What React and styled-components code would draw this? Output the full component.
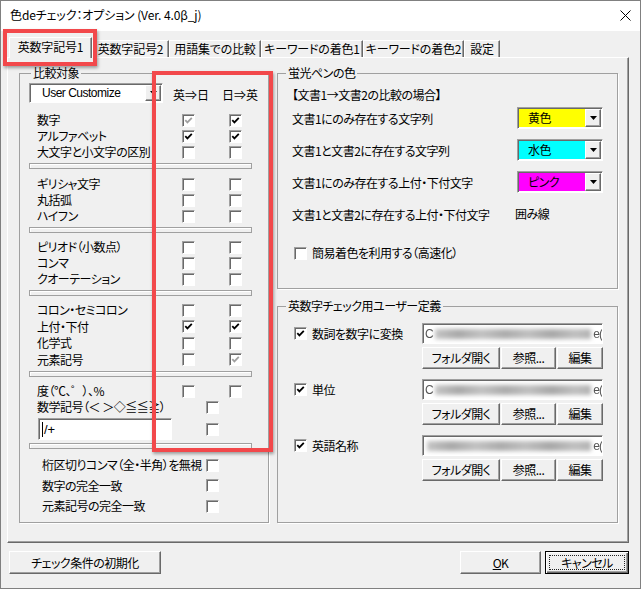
import React from "react";
import styled, { createGlobalStyle, css } from "styled-components";

const FONT = `"Noto Sans CJK JP", "Noto Sans", "Liberation Sans", sans-serif`;

const Global = createGlobalStyle`
  html, body { margin: 0; padding: 0; background: #fff; }
  body {
    font-family: ${FONT};
    font-size: 12px;
    color: #000;
    font-feature-settings: "palt";
    letter-spacing: -0.5px;
  }
  * { box-sizing: border-box; }
`;

const raised = css`
  background: #f0f0f0;
  border: 1px solid;
  border-color: #fff #696969 #696969 #fff;
  box-shadow: inset -1px -1px 0 #a0a0a0;
`;

const sunken = css`
  border: 1px solid;
  border-color: #a0a0a0 #fff #fff #a0a0a0;
  box-shadow: inset 1px 1px 0 #696969;
  background: #fff;
`;

const Window = styled.div`
  position: relative;
  width: 641px;
  height: 589px;
  border: 1px solid #808080;
  background: #f0f0f0;
  overflow: hidden;
`;

const TitleBar = styled.div`
  height: 30px;
  background: #fff;
  display: flex;
  align-items: center;
  justify-content: space-between;
  padding: 0 9px 2px 9px;
`;

const Title = styled.div`
  font-size: 12px;
  line-height: 14px;
  letter-spacing: -0.1px;
`;

const Body = styled.div`
  padding: 0 11px 0 6px;
`;

const TabStrip = styled.div`
  height: 26px;
  display: flex;
  align-items: flex-end;
  padding-left: 2px;
`;

const Tab = styled.div`
  position: relative;
  z-index: ${(p) => (p.$active ? 2 : 0)};
  width: ${(p) => p.$w}px;
  height: ${(p) => (p.$active ? 21 : 17)}px;
  margin-bottom: ${(p) => (p.$active ? -1 : 0)}px;
  padding-bottom: ${(p) => (p.$active ? 2 : 0)}px;
  background: #f0f0f0;
  border-top: 1px solid #fff;
  border-left: 1px solid #fff;
  border-right: 1px solid #696969;
  box-shadow: inset -1px 0 0 #a0a0a0;
  display: flex;
  align-items: center;
  justify-content: center;
  line-height: 14px;
  white-space: nowrap;
  letter-spacing: -0.2px;
`;

const Panel = styled.div`
  width: 622px;
  height: 486px;
  ${raised};
  display: flex;
  gap: 8px;
  padding: 8px 0 0 11px;
`;

const Group = styled.fieldset`
  margin: 0;
  padding: 0;
  min-width: 0;
  width: ${(p) => p.$w}px;
  height: ${(p) => p.$h}px;
  border: 1px solid #a0a0a0;
  box-shadow: 1px 1px 0 #fff;
`;

const Legend = styled.legend`
  margin-left: ${(p) => p.$ml}px;
  padding: 0 2px;
  line-height: 14px;
  font-size: 12px;
`;

const LeftInner = styled.div`
  padding: 3px 0 0 9px;
`;

const TopRow = styled.div`
  display: flex;
  align-items: flex-start;
  height: 20px;
  margin-bottom: 9px;
`;

const Combo = styled.div`
  width: 134px;
  height: 20px;
  display: flex;
  padding: 1px;
  ${sunken};
`;

const ComboText = styled.div`
  flex: 1;
  padding-left: 11px;
  line-height: 16px;
  font-family: "Liberation Sans", ${FONT};
  font-size: 12px;
`;

const ComboButton = styled.div`
  width: 16px;
  ${raised};
  display: flex;
  align-items: center;
  justify-content: center;
`;

const HeaderCell = styled.div`
  width: 36px;
  margin-left: ${(p) => p.$ml}px;
  margin-top: 5px;
  text-align: center;
  line-height: 14px;
  white-space: nowrap;
  letter-spacing: 0;
`;

const CheckRow = styled.div`
  display: grid;
  grid-template-columns: ${(p) => (p.$mid ? "177px 13px" : "153px 13px 34px 13px")};
  align-items: center;
  height: ${(p) => p.$h || 16}px;
`;

const Label = styled.span`
  padding-left: ${(p) => p.$pl ?? 8}px;
  line-height: 14px;
  white-space: nowrap;
`;

const Separator = styled.div`
  width: 223px;
  height: 6px;
  margin: ${(p) => p.$mt}px 0 ${(p) => p.$mb}px;
  border: 1px solid #a0a0a0;
  box-shadow: inset 1px 1px 0 #fff;
`;

const SmallField = styled.div`
  width: 134px;
  height: 22px;
  margin-left: 9px;
  ${sunken};
  display: flex;
  align-items: center;
  padding-left: 3px;
  font-family: "Liberation Sans", ${FONT};
  font-size: 13px;
  letter-spacing: 0;
`;

const Caret = styled.span`
  display: inline-block;
  width: 1px;
  height: 15px;
  background: #000;
  margin-right: 1px;
`;

const FieldRow = styled.div`
  display: grid;
  grid-template-columns: 177px 13px;
  align-items: center;
  height: 22px;
  margin-top: 3px;
`;

const BoxEl = styled.span`
  display: inline-flex;
  align-items: center;
  justify-content: center;
  width: 13px;
  height: 13px;
  ${sunken};
  flex: none;
`;

const RightCol = styled.div`
  display: flex;
  flex-direction: column;
  gap: 10px;
`;

const RightInner = styled.div`
  padding: ${(p) => p.$pt}px 14px 0 14px;
`;

const Heading = styled.div`
  line-height: 14px;
  margin-bottom: 5px;
`;

const ColorRow = styled.div`
  display: flex;
  align-items: center;
  justify-content: space-between;
  height: 22px;
  margin-bottom: 10px;
`;

const ColorSelect = styled.div`
  width: 86px;
  height: 22px;
  display: flex;
  padding: 1px;
  ${sunken};
`;

const ColorFill = styled.div`
  flex: 1;
  background: ${(p) => p.$c};
  padding-left: 9px;
  line-height: 17px;
  font-size: 12px;
`;

const ArrowBtn = styled.div`
  width: 16px;
  ${raised};
  display: flex;
  align-items: center;
  justify-content: center;
`;

const PlainValue = styled.div`
  width: 88px;
  line-height: 14px;
`;

const InlineCheck = styled.label`
  display: flex;
  align-items: center;
  gap: 5px;
  padding-left: 2px;
  line-height: 14px;
  margin-top: ${(p) => p.$mt || 0}px;
`;

const Entry = styled.div`
  display: grid;
  grid-template-columns: 130px 181px;
  margin-bottom: 10px;
`;

const EntryLeft = styled.div`
  height: 21px;
  display: flex;
  align-items: center;
`;

const EntryRight = styled.div`
  display: flex;
  flex-direction: column;
  gap: 3px;
`;

const PathField = styled.div`
  height: 21px;
  ${sunken};
  display: flex;
  align-items: center;
  overflow: hidden;
  padding-left: 2px;
  font-family: "Liberation Sans", ${FONT};
  font-size: 12px;
  color: #333;
`;

const Blur = styled.div`
  flex: 1;
  height: 10px;
  margin: 0 2px;
  background: linear-gradient(
    90deg,
    #c4c4c4 0%,
    #a9a9a9 15%,
    #c2c2c2 30%,
    #acacac 45%,
    #bfbfbf 60%,
    #a8a8a8 75%,
    #c0c0c0 90%,
    #b2b2b2 100%
  );
  filter: blur(2px);
`;

const PathEdge = styled.span`
  flex: none;
  color: #555;
  filter: blur(0.4px);
  letter-spacing: -1px;
`;

const ButtonRow = styled.div`
  display: grid;
  grid-template-columns: 78px 55px 46px;
  gap: 1px;
`;

const Button = styled.div`
  height: ${(p) => p.$h || 22}px;
  width: ${(p) => (p.$w ? `${p.$w}px` : "auto")};
  ${raised};
  display: flex;
  align-items: center;
  justify-content: center;
  line-height: 14px;
  white-space: nowrap;
`;

const DefaultButton = styled.div`
  height: 23px;
  width: ${(p) => p.$w}px;
  background: #f0f0f0;
  border: 1px solid #000;
  box-shadow: inset 1px 1px 0 #fff, inset -1px -1px 0 #696969, inset -2px -2px 0 #a0a0a0;
  display: flex;
  padding: 3px;
`;

const FocusRect = styled.span`
  flex: 1;
  border: 1px dotted #222;
  display: flex;
  align-items: center;
  justify-content: center;
  line-height: 14px;
`;

const Footer = styled.div`
  width: 622px;
  margin-top: 8px;
  display: flex;
  justify-content: space-between;
  padding-left: 2px;
`;

const FooterRight = styled.div`
  display: flex;
  gap: 4px;
`;

const Highlight = styled.div`
  position: absolute;
  left: ${(p) => p.$x}px;
  top: ${(p) => p.$y}px;
  width: ${(p) => p.$w}px;
  height: ${(p) => p.$h}px;
  border: 4px solid #f2484b;
  box-shadow: 1px 2px 3px rgba(0, 0, 0, 0.35);
  pointer-events: none;
  z-index: 5;
`;

const Mark = ({ gray }) => (
  <svg width="9" height="9" viewBox="0 0 9 9">
    <polyline
      points="1.3,4.2 3.4,6.4 7.8,1.8"
      fill="none"
      stroke={gray ? "#a0a0a0" : "#000"}
      strokeWidth="1.8"
    />
  </svg>
);

const Check = ({ on, gray }) => <BoxEl>{on ? <Mark gray={gray} /> : null}</BoxEl>;

const Arrow = () => (
  <svg width="7" height="4" viewBox="0 0 7 4">
    <polygon points="0,0 7,0 3.5,4" fill="#000" />
  </svg>
);

const CloseIcon = () => (
  <svg width="11" height="11" viewBox="0 0 11 11">
    <path d="M0.5 0.5 L10.5 10.5 M10.5 0.5 L0.5 10.5" stroke="#000" strokeWidth="1" />
  </svg>
);

const tabs = [
  { t: "英数字記号1", w: 83, active: true },
  { t: "英数字記号2", w: 77 },
  { t: "用語集での比較", w: 92 },
  { t: "キーワードの着色1", w: 102 },
  { t: "キーワードの着色2", w: 101 },
  { t: "設定", w: 36 },
];

// [label, col1, col2] where value: 0 none, 1 checked, 2 checked gray
const blocks = [
  {
    h: 16,
    rows: [
      ["数字", 2, 1],
      ["アルファベット", 1, 1],
      ["大文字と小文字の区別", 0, 0],
    ],
    sep: [3, 7],
  },
  {
    h: 16,
    rows: [
      ["ギリシャ文字", 0, 0],
      ["丸括弧", 0, 0],
      ["ハイフン", 0, 0],
    ],
    sep: [3, 6],
  },
  {
    h: 16,
    rows: [
      ["ピリオド（小数点）", 0, 0],
      ["コンマ", 0, 0],
      ["クオーテーション", 0, 0],
    ],
    sep: [3, 6],
  },
  {
    h: 16.5,
    rows: [
      ["コロン・セミコロン", 0, 0],
      ["上付・下付", 1, 1],
      ["化学式", 0, 0],
      ["元素記号", 0, 2],
    ],
    sep: [3, 6],
  },
];

const colorRows = [
  { label: "文書1にのみ存在する文字列", c: "#ffff00", v: "黄色" },
  { label: "文書1と文書2に存在する文字列", c: "#00ffff", v: "水色" },
  { label: "文書1にのみ存在する上付・下付文字", c: "#ff00ff", v: "ピンク" },
];

const entries = [
  { label: "数詞を数字に変換", c: true },
  { label: "単位", c: true },
  { label: "英語名称", c: false },
];

export default function App() {
  return (
    <>
      <Global />
      <Window>
        <TitleBar>
          <Title>色deチェック：オプション (Ver. 4.0β_j)</Title>
          <CloseIcon />
        </TitleBar>
        <Body>
          <TabStrip>
            {tabs.map((t) => (
              <Tab key={t.t} $w={t.w} $active={t.active}>
                {t.t}
              </Tab>
            ))}
          </TabStrip>
          <Panel>
            <Group $w={250} $h={457}>
              <Legend $ml={11}>比較対象</Legend>
              <LeftInner>
                <TopRow>
                  <Combo>
                    <ComboText>User Customize</ComboText>
                    <ComboButton>
                      <Arrow />
                    </ComboButton>
                  </Combo>
                  <HeaderCell $ml={10}>英⇒日</HeaderCell>
                  <HeaderCell $ml={13}>日⇒英</HeaderCell>
                </TopRow>
                {blocks.map((b, bi) => (
                  <React.Fragment key={bi}>
                    {b.rows.map(([l, a, c]) => (
                      <CheckRow key={l} $h={b.h}>
                        <Label>{l}</Label>
                        <Check on={a > 0} gray={a === 2} />
                        <span />
                        <Check on={c > 0} gray={c === 2} />
                      </CheckRow>
                    ))}
                    <Separator $mt={b.sep[0]} $mb={b.sep[1]} />
                  </React.Fragment>
                ))}
                <CheckRow>
                  <Label>度（℃、゜）、%</Label>
                  <Check />
                  <span />
                  <Check />
                </CheckRow>
                <CheckRow $mid>
                  <Label>数学記号（＜ ＞◇≦≦≧）</Label>
                  <Check />
                </CheckRow>
                <FieldRow>
                  <SmallField>
                    <Caret />/+
                  </SmallField>
                  <Check />
                </FieldRow>
                <Separator $mt={3} $mb={6} />
                <CheckRow $mid $h={20.5}>
                  <Label $pl={13}>桁区切りコンマ（全・半角）を無視</Label>
                  <Check />
                </CheckRow>
                <CheckRow $mid $h={20.5}>
                  <Label $pl={13}>数字の完全一致</Label>
                  <Check />
                </CheckRow>
                <CheckRow $mid $h={20.5}>
                  <Label $pl={13}>元素記号の完全一致</Label>
                  <Check />
                </CheckRow>
              </LeftInner>
            </Group>
            <RightCol>
              <Group $w={341} $h={223}>
                <Legend $ml={8}>蛍光ペンの色</Legend>
                <RightInner $pt={8}>
                  <Heading>【文書1→文書2の比較の場合】</Heading>
                  {colorRows.map((r) => (
                    <ColorRow key={r.label}>
                      <span>{r.label}</span>
                      <ColorSelect>
                        <ColorFill $c={r.c}>{r.v}</ColorFill>
                        <ArrowBtn>
                          <Arrow />
                        </ArrowBtn>
                      </ColorSelect>
                    </ColorRow>
                  ))}
                  <ColorRow>
                    <span>文書1と文書2に存在する上付・下付文字</span>
                    <PlainValue>囲み線</PlainValue>
                  </ColorRow>
                  <InlineCheck $mt={21}>
                    <Check />
                    簡易着色を利用する（高速化）
                  </InlineCheck>
                </RightInner>
              </Group>
              <Group $w={341} $h={224}>
                <Legend $ml={8}>英数字チェック用ユーザー定義</Legend>
                <RightInner $pt={10}>
                  {entries.map((e) => (
                    <Entry key={e.label}>
                      <EntryLeft>
                        <InlineCheck>
                          <Check on />
                          {e.label}
                        </InlineCheck>
                      </EntryLeft>
                      <EntryRight>
                        <PathField>
                          {e.c ? <PathEdge>C</PathEdge> : null}
                          <Blur />
                          <PathEdge>e(</PathEdge>
                        </PathField>
                        <ButtonRow>
                          <Button>フォルダ開く</Button>
                          <Button>参照...</Button>
                          <Button>編集</Button>
                        </ButtonRow>
                      </EntryRight>
                    </Entry>
                  ))}
                </RightInner>
              </Group>
            </RightCol>
          </Panel>
          <Footer>
            <Button $w={152} $h={23}>
              チェック条件の初期化
            </Button>
            <FooterRight>
              <Button $w={81} $h={23}>
                <u>O</u>K
              </Button>
              <DefaultButton $w={84}>
                <FocusRect>キャンセル</FocusRect>
              </DefaultButton>
            </FooterRight>
          </Footer>
        </Body>
        <Highlight $x={2} $y={28} $w={94} $h={37} />
        <Highlight $x={151} $y={70} $w={121} $h={381} />
      </Window>
    </>
  );
}
